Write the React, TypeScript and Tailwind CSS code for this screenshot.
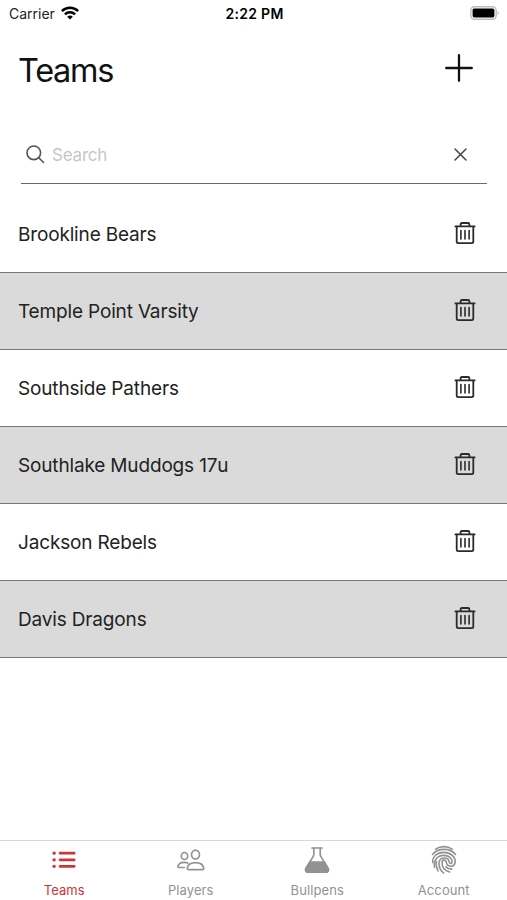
import { useState } from "react";
import type { ReactNode } from "react";

const TEAMS = [
  "Brookline Bears",
  "Temple Point Varsity",
  "Southside Pathers",
  "Southlake Muddogs 17u",
  "Jackson Rebels",
  "Davis Dragons",
];

/* ---------------------------- icons ---------------------------- */

function WifiIcon() {
  return (
    <svg width="18" height="14" viewBox="0 0 18 14" fill="none" stroke="#000" strokeWidth="2.5">
      <path d="M.9 5.1a11.5 11.5 0 0 1 16.2 0" />
      <path d="M3.9 8.3a7.2 7.2 0 0 1 10.2 0" />
      <path d="M9 13.6 6.2 10.8a4 4 0 0 1 5.6 0Z" fill="#000" stroke="none" />
    </svg>
  );
}

function BatteryIcon() {
  return (
    <svg width="30" height="14" viewBox="0 0 30 14">
      <rect x=".8" y=".8" width="25.4" height="12.4" rx="3.6" fill="#fff" stroke="#bdbdbd" strokeWidth="1.4" />
      <rect x="2.6" y="2.6" width="21.8" height="8.8" rx="1.6" fill="#000" />
      <path d="M27.6 4.8c1.6.7 1.6 3.7 0 4.4Z" fill="#bdbdbd" />
    </svg>
  );
}

function TrashIcon() {
  return (
    <svg width="22" height="24" viewBox="0 0 22 24" fill="none" stroke="#2b2b2b" strokeWidth="1.8" strokeLinecap="round" strokeLinejoin="round">
      <path d="M1.4 5.4h19.2" />
      <path d="M6.6 5.2V3.4c0-.9.5-1.4 1.3-1.4h6.2c.8 0 1.3.5 1.3 1.4v1.8" />
      <path d="M2.700 5.6v14.9c0 .9.6 1.6 1.6 1.6h13.4c1 0 1.6-.7 1.6-1.6V5.6" />
      <path d="M6.900 9.6v8.4M11 9.6v8.4M15.1 9.6v8.4" strokeWidth="1.6" />
    </svg>
  );
}

function ListIcon() {
  return (
    <svg width="24" height="18" viewBox="0 0 24 18" fill="none" stroke="currentColor" strokeWidth="2.7" strokeLinecap="round">
      <path d="M8 2.2h14.2M8 8.8h14.2M8 15.3h14.2" />
      <path d="M2 2.2h.2M2 8.8h.2M2 15.3h.2" strokeWidth="3.3" />
    </svg>
  );
}

function PeopleIcon() {
  return (
    <svg width="28" height="24" viewBox="0 0 28 24" fill="none" stroke="currentColor" strokeWidth="1.7" strokeLinecap="round" strokeLinejoin="round">
      <ellipse cx="18.5" cy="6.6" rx="4" ry="4.4" />
      <ellipse cx="7.5" cy="8" rx="3.2" ry="3.5" />
      <path d="M18.5 14.7c-4.4 0-7.7 2.2-8.2 5.500-.1 1 .4 1.5 1.1 1.5h14.2c.7 0 1.2-.5 1.1-1.5-.5-3.300-3.800-5.500-8.200-5.500Z" />
      <path d="M10.8 15c-1-.4-2.1-.6-3.3-.6-3.5 0-6.1 1.5-6.5 4-.1.7.3 1.1.8 1.1h5.4" />
    </svg>
  );
}

function FlaskIcon() {
  return (
    <svg width="26" height="28" viewBox="0 0 26 28" fill="none" stroke="currentColor" strokeWidth="1.7" strokeLinecap="round" strokeLinejoin="round">
      <path d="M8 2h10" />
      <path d="M9.8 2v6.200c0 .9-.2 1.6-.7 2.4L1.900 22.200c-1.200 2.100 0 4 2.300 4h17.600c2.300 0 3.500-1.900 2.300-4L16.900 10.600c-.5-.8-.7-1.5-.7-2.4V2" />
      <path d="M6 16h14l3.900 6.600c1 1.900-.1 3.400-2.100 3.400H4.200c-2 0-3.100-1.500-2.100-3.400Z" fill="currentColor" />
    </svg>
  );
}

function FingerprintIcon() {
  return (
    <svg width="26" height="30" viewBox="0 0 26 30" fill="none" stroke="currentColor" strokeWidth="1.6" strokeLinecap="round">
      <path d="M4.600 4.100C9.500.8 16.300.8 21.200 4.100" />
      <path d="M1.500 9.500C6.700 2.700 19.300 2.700 24.500 9.500" />
      <path d="M1.900 17.700C.8 11.600 6.300 7.400 12.700 7.400c7.200 0 11.700 5 11.500 9.200-.2 3.300-2.400 4.700-4.700 4.600-2.700-.1-3.900-2-4.200-4-.4-2.900-4.200-2.700-4.300.3-.1 4.500 2.900 8.200 7.600 9.600" />
      <path d="M3.500 22.400C2.500 15.500 5.900 10.500 12.800 10.400c5.200 0 8.300 3.400 8.300 6.300 0 2.100-2.600 2.300-2.900.1-.4-2.500-2.500-3.900-5.200-3.800-3.100.2-5 2.500-5 5.700 0 3.600 1.900 7.100 4.600 9.200" />
      <path d="M7 25.800c-1.400-3-2.200-6.200-1.600-9.200" />
      <path d="M14.900 21.700c1.300 1.700 3.500 2.600 6 2.400" />
    </svg>
  );
}

/* ---------------------------- rows ---------------------------- */

function TeamRow({ name, shaded }: { name: string; shaded: boolean }) {
  return (
    <li
      className={`flex h-[77px] items-center justify-between border-b border-[#777] pr-[31px] pl-[18px] ${
        shaded ? "bg-[#dadada]" : "bg-white"
      }`}
    >
      <span className="pt-0.5 text-[19px] tracking-[-0.16px] text-[#222]">{name}</span>
      <button aria-label={`Delete ${name}`} className="-mt-[3px]">
        <TrashIcon />
      </button>
    </li>
  );
}

function Tab({ label, icon, active = false }: { label: string; icon: ReactNode; active?: boolean }) {
  return (
    <button className={`flex flex-col items-center ${active ? "text-[#cf3438]" : "text-[#929295]"}`}>
      <span className="mt-[3px] flex h-8 items-center">{icon}</span>
      <span className="mt-1 text-[13px] leading-5 tracking-[0.1px]">{label}</span>
    </button>
  );
}

export default function App() {
  const [query, setQuery] = useState("");
  const teams = TEAMS.filter((t) => t.toLowerCase().includes(query.toLowerCase()));

  return (
    <div className="flex h-screen flex-col bg-white font-['Inter','Liberation_Sans',sans-serif] text-[#222]">
      <div className="grid h-[26px] grid-cols-3 items-center pr-[7px] pl-[9px] text-black">
        <div className="flex items-center gap-1.5 text-[14px] text-[#222]">
          <span>Carrier</span>
          <WifiIcon />
        </div>
        <span className="text-center text-[14px] font-semibold tracking-[0.3px]">2:22 PM</span>
        <div className="flex justify-end">
          <BatteryIcon />
        </div>
      </div>

      <header className="flex h-[84px] items-center justify-between pr-[34px] pl-[18px]">
        <h1 className="pt-1.5 text-[32.5px] tracking-[-1.3px] text-[#111]">Teams</h1>
        <button aria-label="Add team">
          <svg width="28" height="28" viewBox="0 0 28 28" stroke="#111" strokeWidth="2.3" strokeLinecap="round">
            <path d="M14 1.2v25.6M1.2 14h25.6" />
          </svg>
        </button>
      </header>

      <div className="mt-4 mr-[20px] ml-[21px] flex h-[58px] items-center border-b border-[#6b6b6b] pr-5 pl-[5px]">
        <svg width="19" height="19" viewBox="0 0 19 19" fill="none" stroke="#555" strokeWidth="1.6" strokeLinecap="round">
          <circle cx="7.8" cy="7.8" r="6.8" />
          <path d="m12.8 12.8 4.7 4.7" />
        </svg>
        <input
          value={query}
          onChange={(e) => setQuery(e.target.value)}
          placeholder="Search"
          className="ml-[7px] min-w-0 flex-1 pt-0.5 text-[17px] tracking-[-0.2px] outline-none placeholder:text-[#c6c6c8]"
        />
        <button aria-label="Clear search" onClick={() => setQuery("")}>
          <svg width="13" height="13" viewBox="0 0 13 13" stroke="#444" strokeWidth="1.5" strokeLinecap="round">
            <path d="m1 1 11 11M12 1 1 12" />
          </svg>
        </button>
      </div>

      <ul className="mt-3 flex-1">
        {teams.map((name, i) => (
          <TeamRow key={name} name={name} shaded={i % 2 === 1} />
        ))}
      </ul>

      <nav className="grid h-[60px] grid-cols-4 border-t border-[#d8d8d8] pl-px">
        <Tab label="Teams" icon={<ListIcon />} active />
        <Tab label="Players" icon={<PeopleIcon />} />
        <Tab label="Bullpens" icon={<FlaskIcon />} />
        <Tab label="Account" icon={<FingerprintIcon />} />
      </nav>
    </div>
  );
}
